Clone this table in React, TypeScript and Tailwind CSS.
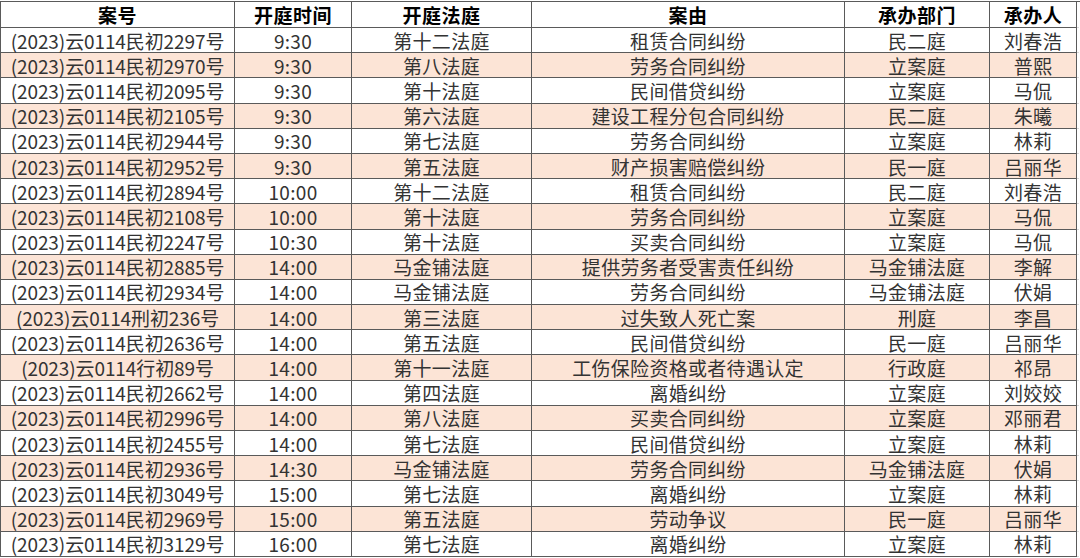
import React from "react";

const rows: [string, string, string, string, string, string][] = [
  ["(2023)云0114民初2297号", "9:30", "第十二法庭", "租赁合同纠纷", "民二庭", "刘春浩"],
  ["(2023)云0114民初2970号", "9:30", "第八法庭", "劳务合同纠纷", "立案庭", "普熙"],
  ["(2023)云0114民初2095号", "9:30", "第十法庭", "民间借贷纠纷", "立案庭", "马侃"],
  ["(2023)云0114民初2105号", "9:30", "第六法庭", "建设工程分包合同纠纷", "民二庭", "朱曦"],
  ["(2023)云0114民初2944号", "9:30", "第七法庭", "劳务合同纠纷", "立案庭", "林莉"],
  ["(2023)云0114民初2952号", "9:30", "第五法庭", "财产损害赔偿纠纷", "民一庭", "吕丽华"],
  ["(2023)云0114民初2894号", "10:00", "第十二法庭", "租赁合同纠纷", "民二庭", "刘春浩"],
  ["(2023)云0114民初2108号", "10:00", "第十法庭", "劳务合同纠纷", "立案庭", "马侃"],
  ["(2023)云0114民初2247号", "10:30", "第十法庭", "买卖合同纠纷", "立案庭", "马侃"],
  ["(2023)云0114民初2885号", "14:00", "马金铺法庭", "提供劳务者受害责任纠纷", "马金铺法庭", "李解"],
  ["(2023)云0114民初2934号", "14:00", "马金铺法庭", "劳务合同纠纷", "马金铺法庭", "伏娟"],
  ["(2023)云0114刑初236号", "14:00", "第三法庭", "过失致人死亡案", "刑庭", "李昌"],
  ["(2023)云0114民初2636号", "14:00", "第五法庭", "民间借贷纠纷", "民一庭", "吕丽华"],
  ["(2023)云0114行初89号", "14:00", "第十一法庭", "工伤保险资格或者待遇认定", "行政庭", "祁昂"],
  ["(2023)云0114民初2662号", "14:00", "第四法庭", "离婚纠纷", "立案庭", "刘姣姣"],
  ["(2023)云0114民初2996号", "14:00", "第八法庭", "买卖合同纠纷", "立案庭", "邓丽君"],
  ["(2023)云0114民初2455号", "14:00", "第七法庭", "民间借贷纠纷", "立案庭", "林莉"],
  ["(2023)云0114民初2936号", "14:30", "马金铺法庭", "劳务合同纠纷", "马金铺法庭", "伏娟"],
  ["(2023)云0114民初3049号", "15:00", "第七法庭", "离婚纠纷", "立案庭", "林莉"],
  ["(2023)云0114民初2969号", "15:00", "第五法庭", "劳动争议", "民一庭", "吕丽华"],
  ["(2023)云0114民初3129号", "16:00", "第七法庭", "离婚纠纷", "立案庭", "林莉"],
];

const headers = ["案号", "开庭时间", "开庭法庭", "案由", "承办部门", "承办人"];

const gridCols = "grid grid-cols-[235px_117px_180px_313px_145px_87px_2px]";

export default function App() {
  return (
    <div
      className="w-[1080px] h-[558px] bg-white overflow-hidden pt-px"
      style={{ fontFamily: '"Noto Sans CJK SC", "Noto Sans", sans-serif' }}
    >
      <div className="w-[1080px] border-t border-[#5a5a5a]">
        <div className={`${gridCols} h-[26px]`}>
          {headers.map((h, i) => (
            <div
              key={i}
              className={`flex items-center justify-center border-b border-r border-[#5a5a5a] text-[19px] font-bold text-black tracking-[0.5px] leading-none ${i === 0 ? "border-l" : ""}`}
            >
              {h}
            </div>
          ))}
          <div className="border-b border-[#d9d9d9]" />
        </div>
        {rows.map((r, ri) => (
          <div key={ri} className={`${gridCols} h-[25.2px]`}>
            {r.map((c, ci) => (
              <div
                key={ci}
                className={`flex items-center justify-center border-b border-r border-[#5a5a5a] text-[19px] text-[#333333] leading-none whitespace-nowrap ${ci === 0 ? "border-l tracking-[-0.1px]" : "tracking-[0.3px]"} ${ri % 2 === 1 ? "bg-[#fce4d6]" : "bg-white"}`}
              >
                {c}
              </div>
            ))}
            <div className="border-b border-[#d9d9d9]" />
          </div>
        ))}
      </div>
    </div>
  );
}
